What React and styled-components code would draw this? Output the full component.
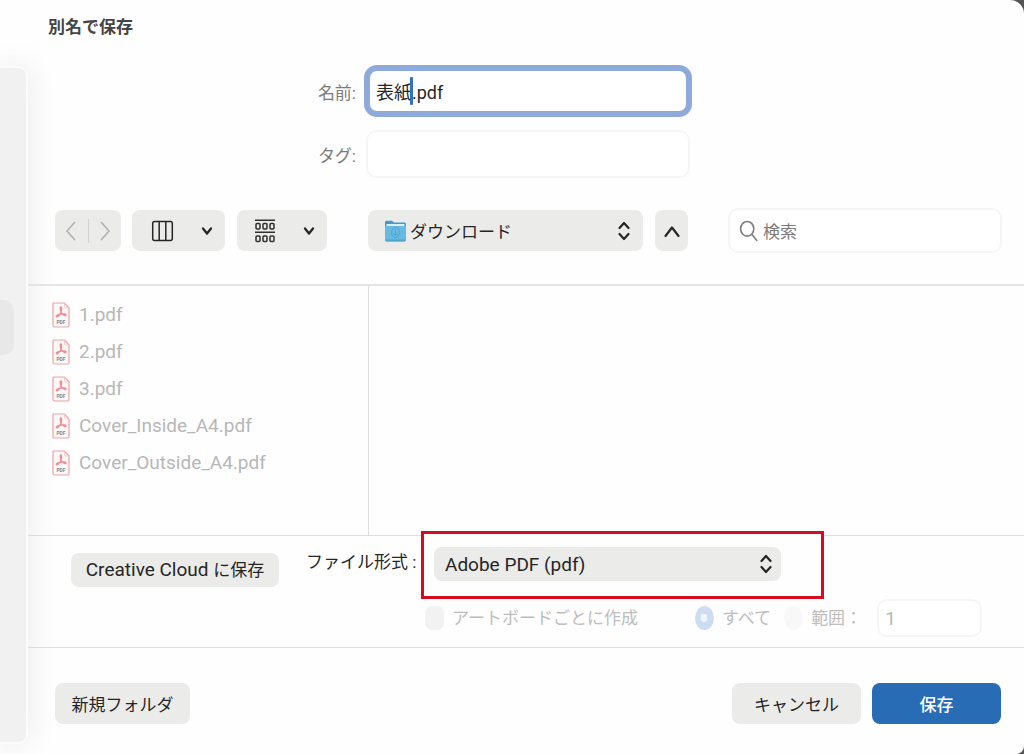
import React from "react";
import styled, { createGlobalStyle, css } from "styled-components";

const GlobalStyle = createGlobalStyle`
  * { box-sizing: border-box; }
  body { margin: 0; background: #555; }
  body, button, input, select {
    font-family: Roboto, "Noto Sans CJK JP", sans-serif;
    font-size: 17px;
    line-height: 24px;
    color: #262626;
  }
`;

const Dialog = styled.div`
  display: grid;
  grid-template-columns: 28px minmax(0, 1fr);
  min-height: 100vh;
  background: #fefefe;
  border-radius: 0 14px 8px 0;
  overflow: hidden;
`;

const SidebarColumn = styled.aside`
  display: flex;
  padding: 66px 0 10px 0;
`;

const SidebarPanel = styled.div`
  flex: 1;
  padding-top: 232px;
  background: #f1f1f1;
  border: 2px solid #fbfbfb;
  border-left: 0;
  border-radius: 0 10px 10px 0;
  box-shadow: 0 0 32px rgba(0, 0, 0, 0.09);
`;

const SidebarSelection = styled.div`
  width: 14px;
  height: 55px;
  background: #e8e8e8;
  border-radius: 0 10px 10px 0;
`;

const Main = styled.main`
  display: flex;
  flex-direction: column;
  position: relative;
`;

const Title = styled.h1`
  margin: 0;
  padding: 15px 20px 0;
  font-size: 17px;
  line-height: 24px;
  font-weight: 700;
  color: #454545;
`;

const NameForm = styled.div`
  display: grid;
  grid-template-columns: minmax(0, 1fr) 328px minmax(0, 1fr);
  column-gap: 8px;
  row-gap: 13px;
  align-items: center;
  padding: 26px 20px 0 24px;
`;

const FieldLabel = styled.label`
  grid-column: 1;
  padding-top: 3px;
  text-align: right;
  color: #7c7c7c;
`;

const FieldBox = styled.div`
  position: relative;
  display: flex;
  padding: ${(p) => (p.$inset ? "0 2px" : "0")};
`;

const TextInput = styled.input`
  flex: 1;
  min-width: 0;
  width: 100%;
  height: 48px;
  padding: 0 10px;
  background: #fff;
  border: 2px solid #f5f5f5;
  border-radius: 10px;
  outline: none;
  ${(p) =>
    p.$focused &&
    css`
      height: 52px;
      padding: 0 6px;
      font-size: 18px;
      border: 6px solid #8eaadb;
      border-radius: 13px;
      caret-color: transparent;
    `}
`;

const Caret = styled.span`
  position: absolute;
  left: 46px;
  top: 12px;
  width: 3px;
  height: 28px;
  border-radius: 1px;
  background: #2f73bd;
`;

const Toolbar = styled.div`
  display: flex;
  align-items: center;
  padding: 30px 22px 31px 27px;
`;

const toolSurface = css`
  height: 41px;
  background: #ebebea;
  border: 0;
  border-radius: 8px;
`;

const NavGroup = styled.div`
  ${toolSurface}
  display: flex;
  align-items: center;
  width: 66px;
  margin-right: 11px;
`;

const NavButton = styled.button`
  flex: 1;
  display: grid;
  place-items: center;
  height: 41px;
  padding: 0;
  background: none;
  border: 0;
`;

const NavDivider = styled.span`
  width: 1px;
  height: 24px;
  background: #d2d2d2;
`;

const ViewButton = styled.button`
  ${toolSurface}
  display: flex;
  align-items: center;
  justify-content: space-between;
  width: ${(p) => p.$width}px;
  padding: 0 12px 0 18px;
  margin-right: ${(p) => p.$gap}px;
`;

const SelectBox = styled.div`
  position: relative;
  width: ${(p) => p.$width}px;
`;

const Select = styled.select`
  appearance: none;
  display: block;
  width: 100%;
  height: ${(p) => p.$height}px;
  padding: 2px 32px 0 ${(p) => p.$indent}px;
  background: #ebebea;
  border: 0;
  border-radius: 8px;
  font-size: ${(p) => p.$size}px;
`;

const SelectArrows = styled.span`
  position: absolute;
  right: ${(p) => p.$right}px;
  top: 0;
  bottom: 0;
  display: grid;
  place-items: center;
  pointer-events: none;
`;

const SelectIcon = styled(SelectArrows)`
  left: 17px;
  right: auto;
`;

const CollapseButton = styled.button`
  ${toolSurface}
  display: grid;
  place-items: center;
  width: 33px;
  padding: 0;
  margin: 0 40px 0 12px;
`;

const Search = styled.label`
  flex: 1;
  display: flex;
  align-items: center;
  gap: 5px;
  min-width: 0;
  height: 45px;
  padding: 0 9px;
  background: #fff;
  border: 2px solid #f5f5f5;
  border-radius: 10px;
`;

const SearchInput = styled.input`
  flex: 1;
  min-width: 0;
  padding: 2px 0 0;
  border: 0;
  outline: none;
  background: none;
  &::placeholder { color: #7c7c7c; opacity: 1; }
`;

const Browser = styled.section`
  flex: 1;
  display: grid;
  grid-template-columns: 341px minmax(0, 1fr);
  min-height: 249px;
  border-top: 2px solid #e5e5e5;
`;

const FileList = styled.ul`
  margin: 0;
  padding: 10px 24px;
  list-style: none;
  border-right: 1px solid #dedede;
`;

const FileRow = styled.li`
  display: flex;
  align-items: center;
  gap: 9px;
  height: 37px;
  font-size: 19px;
  color: #b7b7b7;
`;

const Options = styled.section`
  display: flex;
  align-items: flex-start;
  height: 112px;
  border-top: 1px solid #dedede;
`;

const Button = styled.button`
  height: ${(p) => p.$height || 41}px;
  min-width: ${(p) => p.$width}px;
  padding: 2px 0 0;
  border: 0;
  border-radius: 8px;
  background: ${(p) => (p.$primary ? "#286cb5" : "#ebebea")};
  color: ${(p) => (p.$primary ? "#fff" : "#262626")};
  font-weight: ${(p) => (p.$primary ? 500 : 400)};
`;

const CloudButton = styled(Button)`
  margin: 17px 27px 0 43px;
  padding: 0;
`;

const Latin = styled.span`
  font-size: 19px;
`;

const FormatLabel = styled.label`
  width: 115px;
  margin-top: 14px;
  white-space: pre;
`;

const FormatSettings = styled.div`
  flex: 1;
`;

const Highlight = styled.div`
  position: relative;
  width: 403px;
  height: 68px;
  margin-top: -5px;
  padding: 13px 0 0 10px;
  background: #fefefe;
  border: 3px solid #d70b20;
`;

const ArtboardRow = styled.div`
  display: flex;
  align-items: center;
  padding-left: 4px;
  color: #bdbdbd;
`;

const Choice = styled.label`
  display: flex;
  align-items: center;
  gap: 8px;
  white-space: nowrap;
  margin-right: ${(p) => p.$gap}px;
`;

const Tick = styled.input`
  appearance: none;
  display: grid;
  place-items: center;
  width: 19px;
  height: 24px;
  margin: 0;
  background: #f2f2f2;
  border-radius: 7px;
  &[type="radio"] { border-radius: 50%; background: #f8f8f8; }
  &[type="radio"]:checked { background: #cddcf0; }
  &[type="radio"]:checked::after {
    content: "";
    width: 6px;
    height: 8px;
    border-radius: 1px 1px 3px 3px;
    background: #eef6fc;
  }
`;

const RangeInput = styled.input`
  width: 105px;
  height: 38px;
  padding: 0 6px;
  background: #fff;
  border: 2px solid #f5f5f5;
  border-radius: 10px;
  font-size: 19px;
  color: #b7b7b7;
`;

const Footer = styled.footer`
  display: flex;
  align-items: flex-start;
  gap: 11px;
  padding: 35px 23px 30px 27px;
  border-top: 1px solid #dedede;
`;

const Spacer = styled.div`
  flex: 1;
`;

function Stroke({ w, h, d, color = "#262626", width = 2 }) {
  return (
    <svg width={w} height={h} viewBox={`0 0 ${w} ${h}`} fill="none" stroke={color} strokeWidth={width} strokeLinecap="round" strokeLinejoin="round" aria-hidden="true">
      <path d={d} />
    </svg>
  );
}

const ChevronDown = () => <Stroke w={12} h={10} d="M2 2.5 6 7.5 10 2.5" width={2.3} />;
const UpDown = () => <Stroke w={14} h={20} d="M2.5 7 7 2 11.5 7M2.5 13 7 18 11.5 13" width={2.2} />;

function GroupIcon() {
  return (
    <svg width="20" height="24" viewBox="0 0 20 24" fill="none" stroke="#303030" strokeWidth="1.5" aria-hidden="true">
      <path d="M0 1.2h20M0 13.2h20" />
      {[4.5, 17].map((y) =>
        [1, 8, 15].map((x) => <rect key={`${x}-${y}`} x={x} y={y} width="4" height="5.5" rx="1" />)
      )}
    </svg>
  );
}

function FolderIcon() {
  return (
    <svg width="21" height="22" viewBox="0 0 21 22" aria-hidden="true">
      <path d="M0 2.5Q0 .7 1.5.7H7L9 2.5H19.5Q21 2.5 21 4V10H0Z" fill="#4599c5" />
      <path d="M1.5 4H19.5V8H1.5Z" fill="#d8f0fa" />
      <path d="M0 6H21V19.5Q21 21.5 19.5 21.5H1.5Q0 21.5 0 19.5Z" fill="#67bbe3" />
      <path d="M0 19.5H21Q21 21.5 19.5 21.5H1.5Q0 21.5 0 19.5Z" fill="#4da5d0" />
      <ellipse cx="10.5" cy="12.5" rx="4" ry="5" fill="none" stroke="#4ba3ce" />
      <path d="M10.5 9.5v6M8.8 13.5l1.7 2 1.7-2" fill="none" stroke="#4ba3ce" />
    </svg>
  );
}

function PdfIcon() {
  return (
    <svg width="18" height="26" viewBox="0 0 18 26" fill="none" aria-hidden="true">
      <path d="M2 1H12.5L17 6V23.5Q17 25 15.5 25H2.5Q1 25 1 23.5V2Q1 1 2 1Z" fill="#fdf8f8" stroke="#e9a3aa" strokeWidth="1.2" />
      <path d="M12.5 1V5Q12.5 6 13.5 6H17" stroke="#f1c3c7" strokeWidth=".8" />
      <path d="M8.6 5C10 4.4 9.8 8 8.8 10.4C7.8 12.8 5.4 15.4 4.4 14.6C3.6 13.8 6.5 12.4 9 12C11.6 11.6 14.4 12 14 13.2C13.5 14.4 10.7 12.8 9.4 10.6C8.4 8.8 7.8 5.6 8.6 5Z" stroke="#ee8f96" strokeWidth="1.4" />
      <text x="9" y="22" textAnchor="middle" fontFamily="Roboto, sans-serif" fontSize="5" fontWeight="700" fill="#858585">PDF</text>
    </svg>
  );
}

const files = ["1.pdf", "2.pdf", "3.pdf", "Cover_Inside_A4.pdf", "Cover_Outside_A4.pdf"];

export default function App() {
  return (
    <>
      <GlobalStyle />
      <Dialog>
        <SidebarColumn>
          <SidebarPanel>
            <SidebarSelection />
          </SidebarPanel>
        </SidebarColumn>
        <Main>
          <Title>別名で保存</Title>
          <NameForm>
            <FieldLabel htmlFor="name">名前:</FieldLabel>
            <FieldBox>
              <TextInput id="name" $focused defaultValue="表紙.pdf" />
              <Caret />
            </FieldBox>
            <FieldLabel htmlFor="tags">タグ:</FieldLabel>
            <FieldBox $inset>
              <TextInput id="tags" />
            </FieldBox>
          </NameForm>
          <Toolbar>
            <NavGroup>
              <NavButton aria-label="戻る"><Stroke w={12} h={22} d="M9.5 2.5 2 11 9.5 19.5" color="#b4b4b4" width={1.7} /></NavButton>
              <NavDivider />
              <NavButton aria-label="進む"><Stroke w={12} h={22} d="M2.5 2.5 10 11 2.5 19.5" color="#b4b4b4" width={1.7} /></NavButton>
            </NavGroup>
            <ViewButton $width={93} $gap={12} aria-label="カラム表示">
              <Stroke w={24} h={22} d="M4.5 1.5H20.5Q22.3 1.5 22.3 3.5V18.5Q22.3 20.5 20.5 20.5H4.5Q2.7 20.5 2.7 18.5V3.5Q2.7 1.5 4.5 1.5ZM9.2 1.5V20.5M15.8 1.5V20.5" width={1.5} />
              <ChevronDown />
            </ViewButton>
            <ViewButton $width={90} $gap={41} aria-label="グループ表示">
              <GroupIcon />
              <ChevronDown />
            </ViewButton>
            <SelectBox $width={275}>
              <Select $height={41} $indent={42} $size={17} aria-label="保存先">
                <option>ダウンロード</option>
              </Select>
              <SelectIcon><FolderIcon /></SelectIcon>
              <SelectArrows $right={12}><UpDown /></SelectArrows>
            </SelectBox>
            <CollapseButton aria-label="折りたたむ"><Stroke w={18} h={14} d="M2.5 12 9 3.5 15.5 12" width={2.2} /></CollapseButton>
            <Search>
              <Stroke w={19} h={23} d="M14.8 9.8A6.6 7.3 0 1 1 1.6 9.8A6.6 7.3 0 1 1 14.8 9.8ZM12.8 15.3 17.8 21.5" color="#7c7c7c" width={1.6} />
              <SearchInput type="search" placeholder="検索" aria-label="検索" />
            </Search>
          </Toolbar>
          <Browser>
            <FileList>
              {files.map((name) => (
                <FileRow key={name}><PdfIcon />{name}</FileRow>
              ))}
            </FileList>
          </Browser>
          <Options>
            <CloudButton $width={208} $height={34}><Latin>Creative Cloud </Latin>に保存</CloudButton>
            <FormatLabel htmlFor="format">ファイル形式 :</FormatLabel>
            <FormatSettings>
              <Highlight>
                <SelectBox $width={347}>
                  <Select id="format" $height={34} $indent={11} $size={19}>
                    <option>Adobe PDF (pdf)</option>
                  </Select>
                  <SelectArrows $right={8}><UpDown /></SelectArrows>
                </SelectBox>
              </Highlight>
              <ArtboardRow>
                <Choice $gap={57}><Tick type="checkbox" disabled />アートボードごとに作成</Choice>
                <Choice $gap={13}><Tick type="radio" name="range" defaultChecked disabled />すべて</Choice>
                <Choice $gap={15}><Tick type="radio" name="range" disabled />範囲：</Choice>
                <RangeInput defaultValue="1" aria-label="範囲" disabled />
              </ArtboardRow>
            </FormatSettings>
          </Options>
          <Footer>
            <Button $width={135}>新規フォルダ</Button>
            <Spacer />
            <Button $width={129}>キャンセル</Button>
            <Button $width={129} $primary>保存</Button>
          </Footer>
        </Main>
      </Dialog>
    </>
  );
}
